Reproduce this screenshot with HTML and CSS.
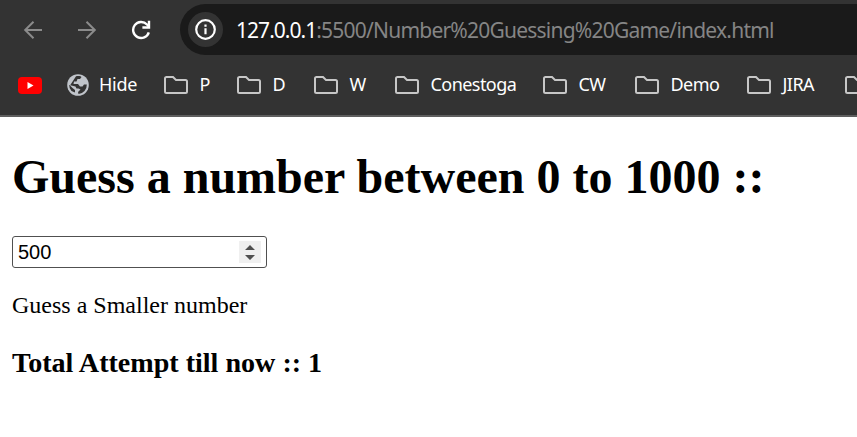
FILE: index.html
```html
<!DOCTYPE html>
<html lang="en">
<head>
<meta charset="utf-8">
<title>Number Guessing Game</title>
<link rel="stylesheet" href="styles.css">
</head>
<body>
<svg class="defs" width="0" height="0" aria-hidden="true">
  <symbol id="folder" viewBox="0 0 24 18"><path d="M2 1h7l3 3h9.500q1.500 0 1.500 1.500v10q0 1.500-1.500 1.500h-19q-1.500 0-1.500-1.500v-13q0-1.500 1.500-1.500z" fill="none" stroke="#c7c7c7" stroke-width="2"/></symbol>
</svg>
<header class="browser">
  <div class="toolbar">
    <svg class="nav" viewBox="0 0 20 20"><path d="M19 10H2.500M10.500 1.700L2.200 10l8.300 8.300" fill="none" stroke="#8b8b8b" stroke-width="2"/></svg>
    <svg class="nav" viewBox="0 0 20 20"><path d="M1 10h16.500M9.500 1.700l8.300 8.300-8.300 8.300" fill="none" stroke="#8b8b8b" stroke-width="2"/></svg>
    <svg class="nav" viewBox="0 0 20 20"><path d="M17.800 12.300A8 8 0 1 1 16 4.500L17.800 6.500" fill="none" stroke="#fff" stroke-width="2.400"/><path d="M19.200 0.700v8h-7.800V6.300h5.400V.7z" fill="#fff"/></svg>
    <div class="address">
      <span class="info"><svg width="21" height="21" viewBox="0 0 21 21"><circle cx="10.500" cy="10.500" r="9.300" fill="none" stroke="#fff" stroke-width="2.200"/><path d="M9.400 9.300h2.200v6H9.400zM9.400 5.500h2.200v2.200H9.400z" fill="#fff"/></svg></span>
      <span class="url"><span class="host">127.0.0.1</span><span class="path">:5500/Number%20Guessing%20Game/index.html</span></span>
    </div>
  </div>
  <nav class="bookmarks">
    <span class="bookmark"><svg width="24" height="17" viewBox="0 0 24 17"><rect width="24" height="17" rx="4" fill="#f00"/><path d="M9.500 5v7l6-3.500z" fill="#fff"/></svg></span>
    <span class="bookmark site"><svg width="22" height="22" viewBox="0 0 22 22"><circle cx="11" cy="11" r="10.800" fill="#c0c4ca"/><path d="M9 2.200C12 1.500 14 2.200 14.500 3L13 5H10.500L9.500 7.500H7L6.500 10H11L13 12.500H15.500L17 10.500H19.800Q20 14 17.500 17Q15 19.800 11.500 20L11 18L13.500 15.500L11.500 14.500H9.500L8.500 12.500L2.200 11Q2 14 4.500 17L8 18.500V16L5.500 14L3 11.500Z" fill="#333" fill-rule="evenodd"/></svg><span class="label">Hide</span></span>
    <span class="bookmark"><svg class="folder"><use href="#folder"/></svg><span class="label">P</span></span>
    <span class="bookmark"><svg class="folder"><use href="#folder"/></svg><span class="label">D</span></span>
    <span class="bookmark"><svg class="folder"><use href="#folder"/></svg><span class="label">W</span></span>
    <span class="bookmark"><svg class="folder"><use href="#folder"/></svg><span class="label">Conestoga</span></span>
    <span class="bookmark"><svg class="folder"><use href="#folder"/></svg><span class="label">CW</span></span>
    <span class="bookmark"><svg class="folder"><use href="#folder"/></svg><span class="label">Demo</span></span>
    <span class="bookmark"><svg class="folder"><use href="#folder"/></svg><span class="label">JIRA</span></span>
    <span class="bookmark"><svg class="folder"><use href="#folder"/></svg></span>
  </nav>
</header>
<main class="page">
  <h1>Guess a number between 0 to 1000 ::</h1>
  <div class="number"><span>500</span><span class="spinner"><svg width="22" height="22" viewBox="0 0 22 22"><path d="M6 9L11 4L16 9zM6 14h10L11 19z" fill="#505050"/></svg></span></div>
  <p>Guess a Smaller number</p>
  <h3>Total Attempt till now :: 1</h3>
</main>
</body>
</html>
```
FILE: styles.css
```css
* { box-sizing: border-box; }
body { margin: 0; background: #fff; color: #000; overflow: hidden; font-family: "Liberation Serif", serif; }
svg { display: block; flex: none; }
.defs { display: none; }
.browser { height: 117px; background: #333; border-bottom: 2px solid #5e5e5e; font-family: "Noto Sans", sans-serif; }
.toolbar { display: flex; align-items: center; height: 55px; padding: 4px 0 0 23px; gap: 34px; }
.nav { width: 20px; height: 20px; }
.address { flex: 1; display: flex; align-items: center; height: 51px; margin-left: -5px; padding-left: 8px; background: #1a1a1a; border-radius: 26px 0 0 26px; }
.info { display: flex; align-items: center; justify-content: center; width: 35px; height: 35px; border-radius: 50%; background: #333; }
.url { margin-left: 13px; font-size: 21px; line-height: 30px; white-space: nowrap; }
.host { color: #fff; letter-spacing: -0.970px; }
.path { color: #858585; letter-spacing: -0.780px; }
.bookmarks { display: grid; grid-template-columns: 49px 97px 73px 77px 81px 148px 92px 112px 98px 24px; align-items: center; height: 60px; padding-left: 18px; color: #fff; font-size: 18px; }
.bookmark { display: flex; align-items: center; gap: 11.500px; white-space: nowrap; letter-spacing: -0.550px; }
.label { margin-top: -2px; }
.site { gap: 10px; letter-spacing: -0.300px; }
.folder { width: 24px; height: 18px; }
.page { padding: 32px 12px; }
h1 { margin: 0 0 32px; font-size: 48px; line-height: 55px; white-space: nowrap; }
.number { display: flex; align-items: center; justify-content: space-between; width: 255px; height: 32px; padding: 0 5px; border: 1px solid #505050; border-radius: 3px; font: 20px/30px "Liberation Sans", sans-serif; }
.spinner { background: #f0f0f0; }
p { margin: 24px 0 0; font-size: 24px; line-height: 27px; }
h3 { margin: 28px 0 0; font-size: 28.080px; line-height: 32px; }
```
